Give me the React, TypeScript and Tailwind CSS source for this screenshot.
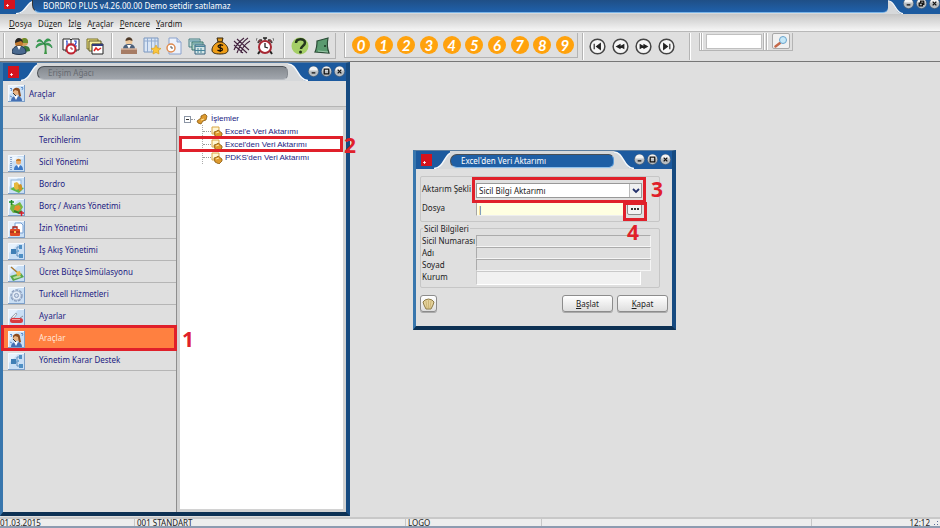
import { useState } from 'react'
import type { ReactNode } from 'react'
import clsx from 'clsx'

type IconProps = { name: string }

function Tile({ children }: { children: ReactNode }) {
  return (
    <svg viewBox="0 0 17 17" className="h-[17px] w-[17px] shrink-0" aria-hidden="true">
      <rect x="0" y="0" width="17" height="17" fill="#7d9fc8" />
      <rect x="0" y="0" width="16" height="16" fill="#f4f9ff" />
      <rect x="1" y="1" width="15" height="15" fill="#c9dff5" />
      <path d="M1 1h9L1 10z" fill="#e6f1fc" />
      {children}
    </svg>
  )
}

function SideIcon({ name }: IconProps) {
  switch (name) {
    case 'tools':
      return (
        <Tile>
          <path d="M2 4l1-1 1 1-1 2M13 3l1-1 1 1-1 2M2 11l2 1" stroke="#5c8fd0" fill="none" />
          <circle cx="8.500" cy="6.500" r="3.500" fill="#e9b483" />
          <path d="M5 7c-1-5 7-6 7-1l1 5-2 1-1-6-3-1-2 2z" fill="#8a4b1f" />
          <path d="M3 16c0-4 3-5 5-5 3 0 6 1 6 5z" fill="#4470b4" />
          <path d="M6 11l2 4 2-4z" fill="#fff" />
          <path d="M5 8l3 3" stroke="#333" />
        </Tile>
      )
    case 'registry':
      return (
        <Tile>
          <path d="M3 2v13" stroke="#335b97" strokeDasharray="1 1" />
          <path d="M5 3h10M5 5h4" stroke="#fff" />
          <circle cx="10.500" cy="7" r="2.500" fill="#eba968" />
          <path d="M8 6c0-3 5-3 5 0z" fill="#c77b24" />
          <path d="M6 15c0-4 2-5 4.500-5S15 11 15 15z" fill="#3c78c6" />
          <path d="M9 10l1.500 3 1.500-3z" fill="#fff" />
        </Tile>
      )
    case 'payroll':
      return (
        <Tile>
          <rect x="3" y="3" width="10" height="8" fill="#edf7ff" stroke="#8fb4da" />
          <path d="M2 12l6-3 8 2-5 5z" fill="#5fb74c" />
          <path d="M6 6l3-1 2 2v5l-3 1-2-2z" fill="#e7b93e" />
          <path d="M10 8l3-1 1 2v4l-3 1z" fill="#cf9425" />
        </Tile>
      )
    case 'advance':
      return (
        <Tile>
          <path d="M3 4l4 2 5-3 3 5-3 5-7 1-3-4z" fill="#74b843" />
          <path d="M7 7l4-1 2 3-3 3-4-1z" fill="#e3902e" />
          <path d="M6 12l5 2 3-2" stroke="#327e28" strokeWidth="2" fill="none" />
          <path d="M1 3h5M3.500 1v5" stroke="#208c26" strokeWidth="1.500" />
          <path d="M11 14h5M13.500 12v5" stroke="#d3202a" strokeWidth="1.500" />
        </Tile>
      )
    case 'leave':
      return (
        <Tile>
          <path d="M7 2h6l2 2v8H7z" fill="#fff" stroke="#77a0d5" />
          <path d="M5 8V6h4v2" fill="none" stroke="#a52217" strokeWidth="1.300" />
          <rect x="2" y="8" width="10" height="7" rx="1" fill="#df4a24" />
          <path d="M2 11h10" stroke="#8d1e12" />
          <path d="M6 10h2v2H6z" fill="#f7cd56" />
        </Tile>
      )
    case 'flow':
      return (
        <Tile>
          <path d="M5 9h4V4h3M9 9v4h3" fill="none" stroke="#5c8cbd" />
          <rect x="3" y="6" width="5" height="5" fill="#3f7fb6" />
          <rect x="11" y="2" width="3" height="4" fill="#4f8fc4" />
          <rect x="11" y="11" width="4" height="4" fill="#4f8fc4" />
          <path d="M9 7h2v2H9z" fill="#73aad6" />
        </Tile>
      )
    case 'budget':
      return (
        <Tile>
          <path d="M2 11l11-3 3 4-11 4z" fill="#57a74a" />
          <path d="M5 12l7-2 1 2-7 2z" fill="#b9dfa1" />
          <path d="M3 2l7 6" stroke="#a8762a" strokeWidth="1.500" />
          <path d="M8 7l4-1 1 4-4 1z" fill="#e8bd4c" />
        </Tile>
      )
    case 'services':
      return (
        <Tile>
          <circle cx="8.500" cy="8.500" r="5.500" fill="none" stroke="#8b9ebd" strokeWidth="1.500" strokeDasharray="3 1" />
          <circle cx="8.500" cy="8.500" r="4.500" fill="#e2eaf6" stroke="#98a9c4" strokeWidth="0.700" />
          <circle cx="8.500" cy="8.500" r="2" fill="#d3dfef" stroke="#8b9ebd" />
        </Tile>
      )
    default:
      return (
        <Tile>
          <path d="M3 9l5-5 1 1-3 4z" fill="#f3f3f3" stroke="#8a8f99" strokeWidth="0.700" />
          <rect x="2" y="9" width="13" height="5" rx="2.500" fill="#d93a3f" />
          <path d="M4 10.500h8" stroke="#f2a0a0" />
          <path d="M12 9l3-2" stroke="#8a8f99" />
        </Tile>
      )
  }
}

function ToolIcon({ name }: IconProps) {
  const art: Record<string, ReactNode> = {
    users: (
      <>
        <circle cx="12" cy="5" r="4" fill="#d1a05a" />
        <path d="M9 6c0-7 8-6 7 0z" fill="#6b8d2c" />
        <path d="M9 16c0-6 2-7 5-7s4 3 4 5z" fill="#38763a" />
        <circle cx="7" cy="6" r="4" fill="#c4792d" />
        <path d="M3 6c0-7 8-6 8 0l-2-2z" fill="#262626" />
        <path d="M0 16c0-5 3-7 7-7s7 2 7 7c-4 2-10 2-14 0z" fill="#49698f" stroke="#22364f" />
        <path d="M5 9l2 4 2-4z" fill="#fff" />
      </>
    ),
    palm: (
      <>
        <path d="M9 7c1 4 1 7 0 10h3c-1-4 0-8-1-10z" fill="#3e9646" />
        <path d="M9 7C7 2 3 1 2 5c3-2 5 0 7 2zM9 7C5 5 1 7 1 11c3-3 5-3 8-4zM9 7c0-5 5-7 7-3-3-1-5 1-7 3zM9 7c4-2 8 0 8 4-2-3-5-3-8-4z" fill="#39a755" stroke="#227b3b" strokeWidth="0.600" />
      </>
    ),
    schedule: (
      <>
        <path d="M1 2h7l1 1 1-1h7v11H1z" fill="#fff" stroke="#222" />
        <path d="M9 3v10M3 14h12" stroke="#222" />
        <path d="M4 4h1v5M12 4h2v2l-2 3h3" stroke="#2440c8" strokeWidth="1.200" fill="none" />
        <circle cx="9" cy="12" r="4.500" fill="#fff" stroke="#bf2431" strokeWidth="2" />
        <path d="M9 10v2h2M6 7h6" stroke="#bf2431" fill="none" />
      </>
    ),
    windows: (
      <>
        <path d="M1 2h11v10H1z" fill="#f3e889" stroke="#78702b" />
        <path d="M3 4h12v10H3z" fill="#f7ef9f" stroke="#5c5626" />
        <path d="M6 7h11v10H6z" fill="#fff" stroke="#222" />
        <path d="M6 7h11v2H6z" fill="#313d79" />
        <path d="M8 14l2-3 2 2 3-2" stroke="#d22" strokeWidth="1.500" fill="none" />
      </>
    ),
    clerk: (
      <>
        <circle cx="9" cy="4.500" r="3.500" fill="#edc79b" />
        <path d="M5.500 4c0-5 7-5 7 0l-3-1z" fill="#4e3928" />
        <path d="M3 12c0-4 3-5 6-5s6 1 6 5z" fill="#4c607b" />
        <path d="M7 8l2 4 2-4z" fill="#fff" />
        <path d="M1 12h16v5H1z" fill="#a67c65" />
        <path d="M1 12h16" stroke="#d7b39c" strokeWidth="1.500" />
      </>
    ),
    sheet: (
      <>
        <path d="M1 1h14v14H1z" fill="#dae6f5" stroke="#7895be" />
        <path d="M4.500 1v14M8.500 1v14M12 1v9M1 4h14" stroke="#91abd0" />
        <path d="M13 8l1.500 3 3.500.5-2.500 2 .5 3.500-3-1.500-3 1.500.5-3.500-2.500-2 3.500-.5z" fill="#fbc63c" stroke="#d69b18" strokeWidth="0.600" />
      </>
    ),
    docclock: (
      <>
        <path d="M4 1h8l4 4v12H4z" fill="#edf2fb" stroke="#8ba2cc" />
        <path d="M12 1v4h4" fill="#c9d7ed" stroke="#8ba2cc" />
        <circle cx="6" cy="11" r="4" fill="#fff" stroke="#df8b50" strokeWidth="1.500" />
        <path d="M6 9v2h2" fill="none" stroke="#555" />
      </>
    ),
    sheets: (
      <>
        <path d="M1 2h11v8H1z" fill="#cae1df" stroke="#477c83" />
        <path d="M4 5h11v8H4z" fill="#b5d7ca" stroke="#37726c" />
        <path d="M7 8h10v9H7z" fill="#d5e7e7" stroke="#34607c" />
        <path d="M7 9.500h10M10 11v5M13 11v5M7 13.500h10M2 4h9M5 7h9" stroke="#48859b" />
      </>
    ),
    money: (
      <>
        <path d="M6 1h6l-1 4H7z" fill="#dc961a" stroke="#34250b" />
        <path d="M7 5C3 7 1 10 1 13c0 3 3 4 8 4s8-1 8-4c0-3-2-6-6-8z" fill="#ef9e18" stroke="#34250b" />
        <path d="M12 8.500c-1-1-5-1-5 .8 0 2.200 4.500 1 4.500 3.200 0 1.800-4 1.500-5 .5M9.200 7v8" stroke="#191105" strokeWidth="1.200" fill="none" />
      </>
    ),
    hatch: (
      <path d="M1 4l13 12M4 2l12 11M1 8l9 8M15 1C9 5 6 10 4 16M17 4C12 7 9 11 8 16M11 1C7 4 3 8 1 13" fill="none" stroke="#43233f" strokeWidth="1.100" />
    ),
    alarm: (
      <>
        <path d="M4 14l-2 3M14 14l2 3" stroke="#222" strokeWidth="2" />
        <circle cx="9" cy="10" r="6" fill="#fff" stroke="#a72934" strokeWidth="2" />
        <path d="M2 6c0-3 2-4 4-3zM16 6c0-3-2-4-4-3z" fill="#bd3139" stroke="#333" />
        <path d="M9 6v4l3 1M7 1h4M9 1v2" fill="none" stroke="#222" strokeWidth="1.300" />
        <path d="M1 1l-1 3M17 1l1 3" stroke="#777" />
      </>
    ),
    help: (
      <>
        <circle cx="9" cy="9" r="8.500" fill="#a5cf67" />
        <path d="M5 6c0-5 9-5 9-.5 0 3.500-4 3.500-4 6.500" fill="none" stroke="#24361d" strokeWidth="2.500" />
        <circle cx="9.500" cy="15" r="1.500" fill="#24361d" />
      </>
    ),
    exit: (
      <>
        <path d="M4 4l11-3c-1 5-1 10 1 15L2 15c2-4 2-8 2-11z" fill="#5b9b70" stroke="#2a4b36" strokeWidth="1.200" />
        <path d="M12 8v2" stroke="#193522" strokeWidth="1.500" />
        <path d="M5 14l10 1" stroke="#9ac6a8" />
      </>
    ),
  }
  return (
    <svg viewBox="0 0 18 18" className="h-[18px] w-[18px]" aria-hidden="true">
      {art[name]}
    </svg>
  )
}

function ToolGroup({ items, className }: { items: [string, string][]; className: string }) {
  return (
    <div className={clsx('flex items-center justify-between', className)}>
      {items.map(([icon, label]) => (
        <button key={icon} type="button" aria-label={label} className="h-[18px] w-[18px]">
          <ToolIcon name={icon} />
        </button>
      ))}
    </div>
  )
}

function Separator({ className }: { className?: string }) {
  return <div className={clsx('w-[2px] shrink-0 self-stretch border-l border-[#b4b4b4] bg-white', className)} />
}

function Logo() {
  return (
    <svg viewBox="0 0 11 12" className="h-[12px] w-[11px] shrink-0" aria-hidden="true">
      <rect width="11" height="12" fill="#d5131d" />
      <path d="M2 8.500h3M3.500 7v3" stroke="#fff" strokeWidth="0.800" />
    </svg>
  )
}

function WindowControls({ restore }: { restore?: boolean }) {
  const glyphs = [
    ['Küçült', 'M4 7.500h4'],
    ['Büyüt', restore ? 'M5 5V3.500h3.500V7H7M3.500 5.500H7v3H3.500z' : 'M3.500 3.500h5v5h-5z'],
    ['Kapat', 'M4 4l4 4M8 4l-4 4'],
  ]
  return (
    <div className="flex shrink-0 items-center gap-[2px]">
      {glyphs.map(([label, d]) => (
        <button key={label} type="button" aria-label={label} className="h-[11px] w-[11px]">
          <svg viewBox="0 0 12 12" className="h-[11px] w-[11px]">
            <circle cx="6" cy="6" r="5.900" fill="#4c6580" />
            <circle cx="6" cy="6" r="5.200" fill="#b9bec2" />
            <path d="M1.500 5a4.500 4.500 0 019 0z" fill="#f4f4f4" />
            <path d={d} fill="none" stroke="#111" strokeWidth="1.400" />
          </svg>
        </button>
      ))}
    </div>
  )
}

// Silver shoulder between the blue corner and the caption
function Shoulder({ className }: { className?: string }) {
  return (
    <svg viewBox="0 0 20 18" preserveAspectRatio="none" className={clsx('h-full shrink-0', className)} aria-hidden="true">
      <path d="M0 18C11 18 10 1 20 1V18z" fill="#d6d8da" />
      <path d="M0 17.500C11 17 10 1 20 1" fill="none" stroke="#f7f9fb" strokeWidth="1.500" />
    </svg>
  )
}

type WindowProps = {
  title: string
  active?: boolean
  className: string
  children: ReactNode
}

function MdiWindow({ title, active, className, children }: WindowProps) {
  return (
    <section
      aria-label={title}
      className={clsx(
        'absolute flex flex-col border-t border-r-4 border-b-4 border-l-3 border-t-[#5c7d9f] border-r-[#164a80] border-b-[#0d3154] border-l-[#3876ad]',
        className,
      )}
    >
      <header className="flex h-[18px] shrink-0 items-stretch bg-[#1c5a9f]">
        <div className="flex w-[18px] items-center pl-[5px]">
          <Logo />
        </div>
        <Shoulder className="w-[20px]" />
        <div className="-ml-[4px] flex min-w-0 flex-1 bg-[#d6d8da] pt-[3px] pb-[1px]">
          <h2
            className={clsx(
              'flex-1 rounded-l-[9px] rounded-r-[7px] border border-t-[#4a4f55] border-l-[#4a4f55] pl-[10px] leading-[12px]',
              active
                ? 'border-r-[#5b9ad6] border-b-[#8fc0ec] bg-[#1f5fa5] text-white'
                : 'border-r-[#84898f] border-b-[#b6babf] bg-linear-to-b from-[#84898f] to-[#a1a6ad] text-[#666a70]',
            )}
          >
            {title}
          </h2>
        </div>
        <Shoulder className="w-[20px] -scale-x-100" />
        <div className="flex items-center pr-px pb-[2px]">
          <WindowControls />
        </div>
      </header>
      <div className="flex min-h-0 flex-1 flex-col bg-[#dfdfdf]">{children}</div>
    </section>
  )
}

const modules = [
  { label: 'Sık Kullanılanlar' },
  { label: 'Tercihlerim' },
  { label: 'Sicil Yönetimi', icon: 'registry' },
  { label: 'Bordro', icon: 'payroll' },
  { label: 'Borç / Avans Yönetimi', icon: 'advance' },
  { label: 'İzin Yönetimi', icon: 'leave' },
  { label: 'İş Akış Yönetimi', icon: 'flow' },
  { label: 'Ücret Bütçe Simülasyonu', icon: 'budget' },
  { label: 'Turkcell Hizmetleri', icon: 'services' },
  { label: 'Ayarlar', icon: 'settings' },
  { label: 'Araçlar', icon: 'tools' },
  { label: 'Yönetim Karar Destek', icon: 'flow' },
]

const treeItems = ["Excel'e Veri Aktarımı", "Excel'den Veri Aktarımı", "PDKS'den Veri Aktarımı"]

function Mark({ className, children }: { className?: string; children: ReactNode }) {
  return (
    <span className={clsx("pointer-events-none absolute font-['Open_Sans',sans-serif] text-[21px] leading-[20px] font-bold text-[#e0202a]", className)}>
      {children}
    </span>
  )
}

function Frame({ className }: { className: string }) {
  return <span className={clsx('pointer-events-none absolute border-3 border-[#e0202a]', className)} />
}

function TreeGlyph({ root }: { root?: boolean }) {
  return (
    <svg viewBox="0 0 12 12" className="h-[12px] w-[12px] shrink-0" aria-hidden="true">
      {!root && <path d="M1 1h7v7H1z" fill="#fff6d2" stroke="#d9a645" />}
      {root ? (
        <path d="M1 8l4-3V3l4-2 2 2-1 4-3 1-2 3-3-1z" fill="#dd9a2e" stroke="#8a5a12" strokeWidth="0.800" />
      ) : (
        <path d="M3 6l3-1 1-1 4 3v2l-3 3-4-2z" fill="#dd9a2e" stroke="#8a5a12" strokeWidth="0.800" />
      )}
      <path d="M5 7l3-1" stroke="#ffe39a" />
    </svg>
  )
}

function AccessTree() {
  const [selected, setSelected] = useState('Araçlar')
  return (
    <MdiWindow title="Erişim Ağacı" className="top-0 bottom-[1px] left-0 w-[350px]">
      <div className="flex h-[26px] shrink-0 items-center gap-[4px] border-b border-[#b5b5b5] pl-[5px] text-[#1b1b82]">
        <SideIcon name="tools" />
        <span>{selected}</span>
      </div>
      <div className="flex min-h-0 flex-1">
        <nav className="w-[173px] shrink-0">
          <ul>
            {modules.map(({ label, icon }) => (
              <li key={label} className="relative">
                <button
                  type="button"
                  onClick={() => setSelected(label)}
                  className={clsx(
                    'flex h-[22px] w-full items-center border-b border-[#b5b5b5] pl-[5px] text-left',
                    label === selected ? 'bg-[#ff8040] text-[#ffe8dc]' : 'text-[#1b1b82]',
                  )}
                >
                  <span className="w-[31px] shrink-0 pt-[3px]">{icon && <SideIcon name={icon} />}</span>
                  <span>{label}</span>
                </button>
                {label === 'Araçlar' && (
                  <>
                    <Frame className="-top-[2px] -right-[1px] -bottom-[2px] -left-[2px]" />
                    <Mark className="top-[2px] left-full ml-[6px]">1</Mark>
                  </>
                )}
              </li>
            ))}
          </ul>
        </nav>
        <div className="flex-1 border-l border-[#8e8e8e] bg-[#d2d2d2] p-[3px]">
          <div className="h-full bg-white pt-[3px] pl-[4px] font-['Liberation_Sans',sans-serif] text-[#1b1b82]">
            <ul role="tree">
              <li>
                <div className="flex h-[12px] items-center">
                  <span className="flex h-[7px] w-[7px] shrink-0 items-center border border-[#8b95a5] px-[1px]">
                    <span className="h-px w-full bg-[#333]" />
                  </span>
                  <span className="mr-[1px] w-[4px] border-t border-dotted border-[#999]" />
                  <TreeGlyph root />
                  <span className="ml-[3px]">İşlemler</span>
                </div>
                <ul className="ml-[18px] border-l border-dotted border-[#aaa]">
                  {treeItems.map((item, i) => (
                    <li key={item} className="relative flex h-[13px] items-center">
                      <span className="w-[8px] shrink-0 border-t border-dotted border-[#999]" />
                      <TreeGlyph />
                      <button type="button" className="ml-[2px] leading-[12px]">
                        {item}
                      </button>
                      {i === 1 && (
                        <>
                          <Frame className="-top-[2px] right-0 -bottom-[1px] -left-[24px]" />
                          <Mark className="-top-[3px] left-full ml-[1px]">2</Mark>
                        </>
                      )}
                    </li>
                  ))}
                </ul>
              </li>
            </ul>
          </div>
        </div>
      </div>
    </MdiWindow>
  )
}

const pushButton = 'h-[17px] rounded-[3px] border border-[#8c8c8c] bg-linear-to-b from-white to-[#dedede] leading-[13px] shadow-[0_1px_0_#aaa]'

function ImportDialog() {
  return (
    <MdiWindow title="Excel'den Veri Aktarımı" active className="top-[88px] left-[413px] h-[180px] w-[263px]">
      <form className="flex flex-1 flex-col px-[4px] pt-[7px]" onSubmit={(e) => e.preventDefault()}>
        <div className="flex w-[240px] flex-col gap-[3px] rounded-[2px] border border-[#c6c6c6] pt-[6px] pb-[4px]">
          <div className="flex h-[16px]">
            <label htmlFor="type" className="w-[55px] pl-[1px] leading-[12px] whitespace-nowrap">
              Aktarım Şekli
            </label>
            <div className="relative h-[15px] w-[166px]">
              <select id="type" className="h-full w-full appearance-none border border-[#999] bg-white pl-[2px]">
                <option>Sicil Bilgi Aktarımı</option>
              </select>
              <span className="pointer-events-none absolute inset-y-[1px] right-[1px] flex w-[12px] items-center justify-center border-l border-[#bbb] bg-[#f1f1f1]">
                <svg viewBox="0 0 8 6" className="h-[6px] w-[8px]">
                  <path d="M1 1l3 3 3-3" fill="none" stroke="#23306b" strokeWidth="1.800" />
                </svg>
              </span>
              <Frame className="-inset-x-[4px] -top-[6px] -bottom-[5px]" />
              <Mark className="-top-[4px] left-full ml-[9px]">3</Mark>
            </div>
          </div>
          <div className="flex h-[15px]">
            <label htmlFor="file" className="w-[55px] pl-[1px] leading-[12px]">
              Dosya
            </label>
            <input id="file" type="text" defaultValue="|" className="h-[14px] w-[148px] border border-[#a5a5a5] border-r-[#eee] border-b-[#eee] bg-[#ffffe1] pl-[1px]" />
            <div className="relative ml-[3px] h-[14px] w-[16px]">
              <button type="button" aria-label="Dosya seç" className="flex h-[13px] w-[15px] items-center justify-center gap-[1px] rounded-[2px] border border-[#8c8c8c] bg-[#f3f3f3]">
                <i className="h-[2px] w-[2px] bg-[#333]" />
                <i className="h-[2px] w-[2px] bg-[#333]" />
                <i className="h-[2px] w-[2px] bg-[#333]" />
              </button>
              <Frame className="-inset-x-[4px] top-0 -bottom-[5px]" />
              <Mark className="top-[20px] left-0">4</Mark>
            </div>
          </div>
        </div>
        <fieldset className="w-[240px] rounded-[2px] border border-[#c6c6c6] pb-[2px]">
          <legend className="ml-[2px] px-[1px] leading-[13px]">Sicil Bilgileri</legend>
          {['Sicil Numarası', 'Adı', 'Soyad'].map((label) => (
            <div key={label} className="flex h-[12px]">
              <label htmlFor={label} className="w-[55px] pl-[1px] leading-[11px] whitespace-nowrap">
                {label}
              </label>
              <input id={label} type="text" readOnly className="w-[175px] border border-[#ababab] border-r-[#f5f5f5] border-b-[#f5f5f5] bg-[#dfdfdf]" />
            </div>
          ))}
          <div className="flex h-[14px]">
            <label htmlFor="org" className="w-[55px] pl-[1px] leading-[12px]">
              Kurum
            </label>
            <input id="org" type="text" className="w-[165px] border border-[#c9c9c9] border-r-white border-b-white bg-[#f1f1f1]" />
          </div>
        </fieldset>
        <div className="mt-[7px] flex gap-[4px]">
          <button type="button" aria-label="Yardım" className={clsx(pushButton, 'mr-auto flex w-[17px] items-center justify-center')}>
            <svg viewBox="0 0 13 12" className="h-[12px] w-[13px]">
              <path d="M1 4l2-2 3.500-1L10 2l2 2-1 3-2 4H4L2 7z" fill="#e4d29b" stroke="#8d7a45" />
              <path d="M6.500 2v8M4 3l1 7M9 3l-1 7" stroke="#c3ab68" strokeWidth="0.700" />
            </svg>
          </button>
          <button type="submit" className={clsx(pushButton, 'w-[51px]')}>
            <u>B</u>aşlat
          </button>
          <button type="button" className={clsx(pushButton, 'w-[51px]')}>
            <u>K</u>apat
          </button>
        </div>
      </form>
    </MdiWindow>
  )
}

const menu = [
  ['', 'D', 'osya'],
  ['Dü', 'z', 'en'],
  ['İzl', 'e', ''],
  ['A', 'r', 'açlar'],
  ['', 'P', 'encere'],
  ['', 'Y', 'ardım'],
]

const navIcons = [
  ['İlk', 'M5.500 6v6M12 6v6L8 9z'],
  ['Önceki', 'M8.500 7v4L5 9zM12.500 7v4L9 9z'],
  ['Sonraki', 'M9.500 7v4L13 9zM5.500 7v4L9 9z'],
  ['Son', 'M12.500 6v6M6 6v6l4-3z'],
]

export default function App() {
  return (
    <div className="flex h-screen flex-col overflow-hidden bg-[#dfdfdf] font-['Noto_Sans',sans-serif] text-[8px] leading-[12px] text-[#222]">
      <header className="flex h-[14px] shrink-0 items-stretch bg-[#1c5a9f]">
        <div className="w-[16px] overflow-hidden pl-[4px]">
          <div className="-mt-[3px]">
            <Logo />
          </div>
        </div>
        <Shoulder className="w-[20px]" />
        <div className="-ml-[4px] flex min-w-0 flex-1 bg-[#d6d8da] pb-[1px]">
          <h1 className="flex-1 rounded-bl-[8px] rounded-br-[5px] border-b border-l border-b-[#79b4e8] border-l-[#333] bg-linear-to-b from-[#1f4f86] to-[#1f61ab] pl-[10px] leading-[12px] text-white">
            BORDRO PLUS v4.26.00.00 Demo setidir satılamaz
          </h1>
        </div>
        <Shoulder className="w-[15px] -scale-x-100" />
        <div className="-mt-[2px] flex items-start">
          <WindowControls restore />
        </div>
      </header>

      <nav className="flex h-[17px] shrink-0 items-center gap-[6px] bg-linear-to-b from-[#c6c6c6] to-[#f6f6f6] pt-[3px] pl-[9px]">
        {menu.map(([before, key, after]) => (
          <button key={key} type="button">
            {before}
            <u>{key}</u>
            {after}
          </button>
        ))}
      </nav>

      <div className="flex h-[31px] shrink-0 items-stretch border-t border-b border-t-[#b8b8b8] border-b-[#777] py-[1px]">
        <div className="flex h-[26px] border-r border-b border-[#b4b4b4] pr-[4px]">
          <Separator className="ml-[3px]" />
          <ToolGroup className="ml-[7px] w-[41px]" items={[['users', 'Kullanıcılar'], ['palm', 'İzin']]} />
          <Separator className="ml-[4px]" />
          <ToolGroup className="ml-[3px] w-[42px]" items={[['schedule', 'Takvim'], ['windows', 'Pencereler']]} />
          <Separator className="ml-[7px]" />
          <ToolGroup
            className="ml-[7px] w-[154px]"
            items={[
              ['clerk', 'Personel'],
              ['sheet', 'Puantaj'],
              ['docclock', 'Vardiya'],
              ['sheets', 'Tablolar'],
              ['money', 'Ödeme'],
              ['hatch', 'Kesinti'],
              ['alarm', 'Alarm'],
            ]}
          />
          <Separator className="ml-[9px]" />
          <ToolGroup className="ml-[6px] w-[40px]" items={[['help', 'Yardım'], ['exit', 'Çıkış']]} />
        </div>
        <div className="ml-[8px] flex h-[25px] border-r border-b border-[#b4b4b4] pr-[3px]">
          <Separator />
          <div className="ml-[6px] flex w-[222px] items-center justify-between">
            {Array.from({ length: 10 }, (_, n) => (
              <button
                key={n}
                type="button"
                className="h-[18px] w-[18px] rounded-full bg-[#ffa20d] font-['Lato',sans-serif] text-[15px] leading-[18px] font-bold text-white italic"
              >
                {n}
              </button>
            ))}
          </div>
        </div>
        <Separator className="ml-[4px]" />
        <div className="ml-[5px] flex w-[86px] items-center justify-between">
          {navIcons.map(([label, d]) => (
            <button key={label} type="button" aria-label={label} className="h-[17px] w-[17px]">
              <svg viewBox="0 0 18 18" className="h-[17px] w-[17px]">
                <circle cx="9" cy="9" r="7.800" fill="#f6f6f6" stroke="#444" strokeWidth="1.600" />
                <path d={d} fill="#222" stroke="#222" strokeWidth="1.200" />
              </svg>
            </button>
          ))}
        </div>
        <Separator className="ml-[14px]" />
        <div className="ml-[8px] flex h-[18px] border-r border-b border-[#b4b4b4]">
          <Separator />
          <Separator className="mr-[3px]" />
          <input type="text" aria-label="Ara" className="mt-[1px] h-[15px] w-[56px] border border-[#c0c0c0] bg-white px-[2px]" />
          <Separator className="ml-[1px]" />
          <Separator className="mr-[4px] ml-[1px]" />
          <button type="button" aria-label="Bul" className="mr-[2px] flex h-[16px] w-[18px] items-center justify-center rounded-[2px] border border-[#a8a8a8] bg-[#f1f1f1]">
            <svg viewBox="0 0 14 13" className="h-[13px] w-[14px]">
              <path d="M1.500 11.500L6 8" stroke="#c4694a" strokeWidth="2.500" strokeLinecap="round" />
              <circle cx="9" cy="5" r="3.500" fill="#c5e8f8" stroke="#6aa4cc" />
            </svg>
          </button>
        </div>
      </div>

      <main className="relative min-h-0 flex-1">
        <AccessTree />
        <ImportDialog />
      </main>

      <footer className="flex h-[11px] shrink-0 border-t-2 border-b-2 border-t-[#c8c8c8] border-b-[#8d9bb0] bg-[#ededed] leading-[8px]">
        <span className="w-[134px]">01.03.2015</span>
        <span className="w-[271px] border-l border-[#c8c8c8] pl-[2px]">001 STANDART</span>
        <span className="w-[136px] border-l border-[#c8c8c8] pl-[2px]">LOGO</span>
        <span className="flex-1 border-l border-[#c8c8c8]" />
        <span className="flex w-[129px] justify-end gap-[3px] border-l border-[#c8c8c8] pr-[1px]">
          12:12
          <svg viewBox="0 0 6 6" className="mt-[1px] h-[6px] w-[6px]" aria-hidden="true">
            <path d="M4 1h1v1H4zM4 4h1v1H4zM1 4h1v1H1z" fill="#5a6a9a" />
          </svg>
        </span>
      </footer>
    </div>
  )
}
